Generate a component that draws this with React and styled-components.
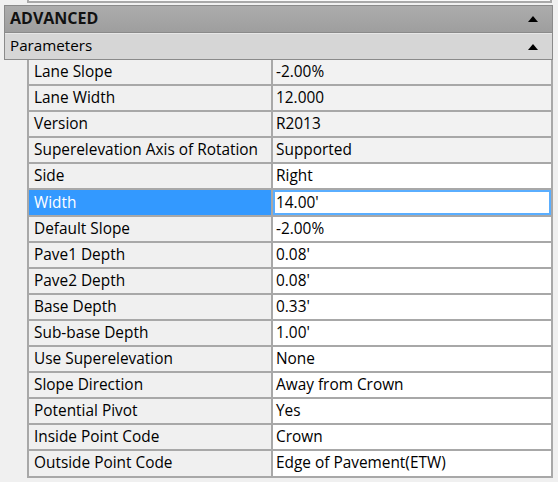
import styled, { createGlobalStyle } from "styled-components";

const GlobalStyle = createGlobalStyle`
  html, body {
    margin: 0;
    padding: 0;
    background: #f0f0f0;
  }
  body {
    font-family: "Open Sans", "Noto Sans", sans-serif;
    font-size: 15.4px;
    color: #000;
  }
`;

const rows = [
  { label: "Lane Slope", value: "-2.00%", readOnly: true },
  { label: "Lane Width", value: "12.000", readOnly: true },
  { label: "Version", value: "R2013", readOnly: true },
  { label: "Superelevation Axis of Rotation", value: "Supported", readOnly: true },
  { label: "Side", value: "Right" },
  { label: "Width", value: "14.00'", selected: true },
  { label: "Default Slope", value: "-2.00%" },
  { label: "Pave1 Depth", value: "0.08'" },
  { label: "Pave2 Depth", value: "0.08'" },
  { label: "Base Depth", value: "0.33'" },
  { label: "Sub-base Depth", value: "1.00'" },
  { label: "Use Superelevation", value: "None" },
  { label: "Slope Direction", value: "Away from Crown" },
  { label: "Potential Pivot", value: "Yes" },
  { label: "Inside Point Code", value: "Crown" },
  { label: "Outside Point Code", value: "Edge of Pavement(ETW)" },
];

function CollapseArrow() {
  return (
    <svg width="10" height="6" viewBox="0 0 10 6">
      <polygon points="5,0 10,6 0,6" fill="#000" />
    </svg>
  );
}

function App() {
  return (
    <Page>
      <GlobalStyle />
      <PrevTableEdge />
      <Section>
        <SectionHeader>
          <span>ADVANCED</span>
          <CollapseArrow />
        </SectionHeader>
        <GroupHeader>
          <span>Parameters</span>
          <CollapseArrow />
        </GroupHeader>
      </Section>
      <Grid>
        {rows.map((row) => (
          <Row key={row.label}>
            <LabelCell $selected={row.selected}>{row.label}</LabelCell>
            <ValueCell $selected={row.selected} $readOnly={row.readOnly}>
              {row.value}
            </ValueCell>
          </Row>
        ))}
      </Grid>
    </Page>
  );
}

const Page = styled.div`
  width: 558px;
  height: 482px;
  overflow: hidden;
  background: #f0f0f0;
  display: flex;
  flex-direction: column;
`;

const PrevTableEdge = styled.div`
  margin: 0 6px 0 27px;
  height: 1px;
  background: #fafafa;
  border-bottom: 2px solid #a8a8a8;
  border-left: 2px solid #a8a8a8;
  border-right: 2px solid #a8a8a8;
  margin-bottom: 2px;
`;

const Section = styled.div`
  margin-left: 4px;
  width: 547px;
  border: 1px solid #8a8a8a;
  border-bottom: none;
  display: flex;
  flex-direction: column;
`;

const HeaderBase = styled.div`
  display: flex;
  align-items: center;
  justify-content: space-between;
  padding: 0 14px 0 5px;
  border-bottom: 1px solid #8a8a8a;
  white-space: nowrap;

  span {
    margin-top: -3px;
  }
`;

const SectionHeader = styled(HeaderBase)`
  height: 26px;
  background: linear-gradient(#acacac, #9e9e9e);
  font-weight: 700;
  font-size: 16px;
  color: #111;
`;

const GroupHeader = styled(HeaderBase)`
  height: 25px;
  background: #d6d6d6;
  border-top: 1px solid #e6e6e6;
  font-size: 15.2px;
`;

const Grid = styled.div`
  margin-left: 27px;
  width: 522px;
  border-left: 2px solid #a8a8a8;
  border-right: 2px solid #a8a8a8;
  display: flex;
  flex-direction: column;
`;

const Row = styled.div`
  display: grid;
  grid-template-columns: 244px 1fr;
  height: 26.1px;
  border-bottom: 2px solid #a8a8a8;
  box-sizing: border-box;
`;

const LabelCell = styled.div`
  display: flex;
  align-items: center;
  padding: 0 0 1px 5px;
  border-right: 2px solid #a8a8a8;
  background: ${(p) => (p.$selected ? "#3399ff" : "#f0f0f0")};
  color: ${(p) => (p.$selected ? "#fff" : "#000")};
  white-space: nowrap;
  overflow: hidden;
`;

const ValueCell = styled.div`
  display: flex;
  align-items: center;
  padding: 0 0 1px 3px;
  background: ${(p) => (p.$readOnly ? "#f2f2f2" : "#fff")};
  box-shadow: ${(p) => (p.$selected ? "inset 0 0 0 2px #5aaeff" : "none")};
  white-space: nowrap;
`;

export default App;
